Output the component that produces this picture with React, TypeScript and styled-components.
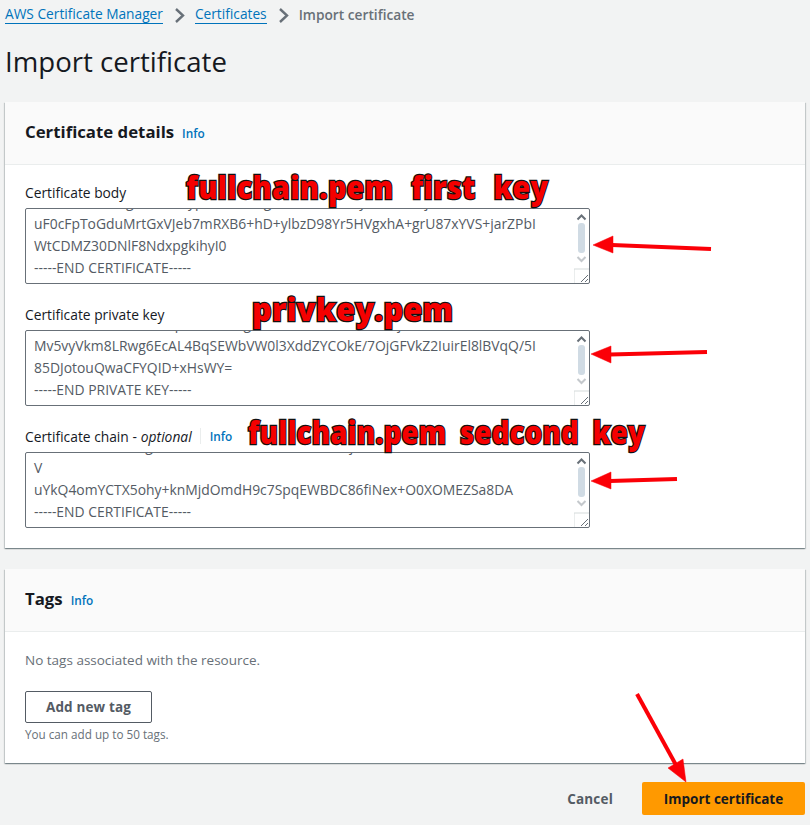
import React from "react";
import styled, { createGlobalStyle } from "styled-components";

const GlobalStyle = createGlobalStyle`
  html, body {
    margin: 0;
    padding: 0;
    background: #f2f3f3;
  }
  body {
    font-family: "Open Sans", "Noto Sans", sans-serif;
    color: #16191f;
  }
`;

const Page = styled.div`
  position: relative;
  width: 810px;
  height: 825px;
  overflow: hidden;
  padding: 5px 5px 0;
  box-sizing: border-box;
`;

const Breadcrumbs = styled.nav`
  display: flex;
  align-items: center;
  height: 19px;
  font-size: 13.72px;
`;

const Crumb = styled.a`
  color: #0073bb;
  border-bottom: 1px solid #0073bb;
  line-height: 18px;
`;

const CurrentCrumb = styled.span`
  color: #687078;
  font-weight: 600;
  line-height: 18px;
`;

const CrumbSeparator = styled.svg`
  width: 32px;
  height: 16px;
  flex: none;
`;

const Title = styled.h1`
  margin: 17px 0 21px;
  font-size: 27.6px;
  line-height: 40px;
  font-weight: 400;
  color: #16191f;
`;

const Card = styled.section`
  background: #fff;
  margin-bottom: 21px;
  box-shadow: 0 1px 1px 0 rgba(0, 28, 36, 0.3), 1px 1px 1px 0 rgba(0, 28, 36, 0.15),
    -1px 1px 1px 0 rgba(0, 28, 36, 0.15);
`;

const CardHeader = styled.header`
  display: flex;
  align-items: baseline;
  gap: 8px;
  height: 63px;
  box-sizing: border-box;
  padding: 19px 20px 0;
  background: #fafafa;
  border-bottom: 1px solid #eaeded;
`;

const CardTitle = styled.h2`
  margin: 0;
  font-size: 16.8px;
  line-height: 22px;
  font-weight: 700;
`;

const InfoLink = styled.a`
  color: #0073bb;
  font-size: 11.8px;
  font-weight: 600;
`;

const CardBody = styled.div<{ $top: number }>`
  padding: ${(p) => p.$top}px 20px 20px;
`;

const Field = styled.div`
  margin-bottom: 20px;
  &:last-child {
    margin-bottom: 0;
  }
`;

const Label = styled.div`
  display: flex;
  align-items: center;
  height: 20px;
  margin-bottom: 6px;
  font-size: 13.8px;
  color: #16191f;
  em {
    margin-left: 4px;
  }
`;

const LabelDivider = styled.span`
  width: 1px;
  height: 16px;
  margin: 0 9px 0 8px;
  background: #eaeded;
`;

const TextBox = styled.div`
  position: relative;
  display: flex;
  flex-direction: column;
  justify-content: flex-end;
  width: 565px;
  height: 76px;
  box-sizing: border-box;
  padding: 0 8px 4px;
  overflow: hidden;
  background: #fff;
  border: 1px solid #687078;
  border-radius: 2px;
  font-size: 13.9px;
  line-height: 22px;
  color: #545b64;
  white-space: nowrap;
`;

const Scrollbar = styled.svg`
  position: absolute;
  top: 0;
  right: 0;
  width: 15px;
  height: 74px;
`;

const Note = styled.div<{ $x: number; $y: number; $scale: number; $gap: number }>`
  position: absolute;
  left: ${(p) => p.$x}px;
  top: ${(p) => p.$y}px;
  font-family: "Open Sans", sans-serif;
  font-weight: 800;
  font-size: 31px;
  line-height: 36px;
  letter-spacing: 0.4px;
  word-spacing: ${(p) => p.$gap}px;
  color: #f50000;
  white-space: nowrap;
  -webkit-text-stroke: 2.5px #111;
  paint-order: stroke fill;
  transform: scaleX(${(p) => p.$scale});
  transform-origin: left center;
`;

const Arrows = styled.svg`
  position: absolute;
  left: 0;
  top: 0;
  width: 810px;
  height: 825px;
  pointer-events: none;
`;

const EmptyText = styled.p`
  margin: 0 0 21px;
  font-size: 13.5px;
  line-height: 20px;
  color: #687078;
`;

const OutlineButton = styled.button`
  display: block;
  width: 127px;
  height: 32px;
  box-sizing: border-box;
  padding: 0;
  background: #fff;
  border: 1px solid #545b64;
  border-radius: 2px;
  font: 700 13.5px "Open Sans", sans-serif;
  letter-spacing: 0.15px;
  color: #545b64;
`;

const Hint = styled.div`
  margin-top: 3px;
  font-size: 11.7px;
  line-height: 17px;
  color: #687078;
`;

const Actions = styled.div`
  display: flex;
  justify-content: flex-end;
  align-items: center;
  gap: 29px;
  margin-top: -2px;
`;

const CancelButton = styled.button`
  padding: 0;
  background: none;
  border: 0;
  font: 700 13.5px "Open Sans", sans-serif;
  letter-spacing: 0.2px;
  color: #545b64;
`;

const PrimaryButton = styled.button`
  width: 163px;
  height: 33px;
  padding: 0;
  background: #ff9900;
  border: 0;
  border-radius: 2px;
  font: 700 13.5px "Open Sans", sans-serif;
  color: #16191f;
`;

const Separator = () => (
  <CrumbSeparator viewBox="0 0 32 16">
    <polyline points="13,2 20,8.5 13,15" fill="none" stroke="#687078" strokeWidth="2.4" />
  </CrumbSeparator>
);

const ScrollControls = () => (
  <Scrollbar viewBox="0 0 15 74">
    <polyline points="3.5,10.5 7.5,6.5 11.5,10.5" fill="none" stroke="#687078" strokeWidth="2" />
    <rect x="4" y="14" width="7" height="30" rx="3" fill="#d0dbe4" />
    <polyline points="3.5,48 7.5,52 11.5,48" fill="none" stroke="#c4c8cc" strokeWidth="2" />
    <path d="M0 74V60H15" fill="#fff" stroke="#d5dbdb" />
    <path d="M7 73L14 66M11 73L14 70" stroke="#687078" fill="none" />
  </Scrollbar>
);

type CertificateFieldProps = {
  label: React.ReactNode;
  lines: string[];
};

const CertificateField = ({ label, lines }: CertificateFieldProps) => (
  <Field>
    <Label>{label}</Label>
    <TextBox>
      {lines.map((line) => (
        <div key={line}>{line}</div>
      ))}
      <ScrollControls />
    </TextBox>
  </Field>
);

export default function App() {
  return (
    <Page>
      <GlobalStyle />
      <Breadcrumbs>
        <Crumb>AWS Certificate Manager</Crumb>
        <Separator />
        <Crumb>Certificates</Crumb>
        <Separator />
        <CurrentCrumb>Import certificate</CurrentCrumb>
      </Breadcrumbs>
      <Title>Import certificate</Title>

      <Card>
        <CardHeader>
          <CardTitle>Certificate details</CardTitle>
          <InfoLink>Info</InfoLink>
        </CardHeader>
        <CardBody $top={17}>
          <CertificateField
            label="Certificate body"
            lines={[
              "MFAkRE4TXb0gNMz8HcypU3BXLD7gA4KNmOE6Zty1VeH0XRjB7cWkLx",
              "uF0cFpToGduMrtGxVJeb7mRXB6+hD+ylbzD98Yr5HVgxhA+grU87xYVS+jarZPbI",
              "WtCDMZ30DNlF8NdxpgkihyI0",
              "-----END CERTIFICATE-----",
            ]}
          />
          <CertificateField
            label="Certificate private key"
            lines={[
              "K8TXAEb0WNMz3HcRpU5BXLD7gA4KNmOE6Zt1VeH0XRjB7cWkLxST",
              "Mv5vyVkm8LRwg6EcAL4BqSEWbVW0l3XddZYCOkE/7OjGFVkZ2IuirEl8lBVqQ/5I",
              "85DJotouQwaCFYQID+xHsWY=",
              "-----END PRIVATE KEY-----",
            ]}
          />
          <CertificateField
            label={
              <>
                Certificate chain -<em>optional</em>
                <LabelDivider />
                <InfoLink>Info</InfoLink>
              </>
            }
            lines={[
              "TXb0WNMz8HRUgBXLD7ZA4KNmOE6Zt1VeH0XRjB7cWkLxST3Dd",
              "V",
              "uYkQ4omYCTX5ohy+knMjdOmdH9c7SpqEWBDC86fiNex+O0XOMEZSa8DA",
              "-----END CERTIFICATE-----",
            ]}
          />
        </CardBody>
      </Card>

      <Card>
        <CardHeader>
          <CardTitle>Tags</CardTitle>
          <InfoLink>Info</InfoLink>
        </CardHeader>
        <CardBody $top={18}>
          <EmptyText>No tags associated with the resource.</EmptyText>
          <OutlineButton>Add new tag</OutlineButton>
          <Hint>You can add up to 50 tags.</Hint>
        </CardBody>
      </Card>

      <Actions>
        <CancelButton>Cancel</CancelButton>
        <PrimaryButton>Import certificate</PrimaryButton>
      </Actions>

      <Note $x={186} $y={169} $scale={0.92} $gap={11}>fullchain.pem first key</Note>
      <Note $x={252} $y={291} $scale={0.98} $gap={7}>privkey.pem</Note>
      <Note $x={248} $y={414} $scale={0.88} $gap={7}>fullchain.pem sedcond key</Note>

      <Arrows viewBox="0 0 810 825">
        <g fill="#fb0007" stroke="#fb0007">
          <path d="M711 249L612 245" strokeWidth="4" fill="none" />
          <polygon points="593,245 613,236 613,253" strokeWidth="0.5" />
          <path d="M707 352L610 354.5" strokeWidth="4" fill="none" />
          <polygon points="591,354 611,346 611,363" strokeWidth="0.5" />
          <path d="M677 479L610 481" strokeWidth="4" fill="none" />
          <polygon points="591,481 611,472 611,489" strokeWidth="0.5" />
          <path d="M637 694L676 765" strokeWidth="4" fill="none" />
          <polygon points="686,782 668,768 683,759" strokeWidth="0.5" />
        </g>
      </Arrows>
    </Page>
  );
}
